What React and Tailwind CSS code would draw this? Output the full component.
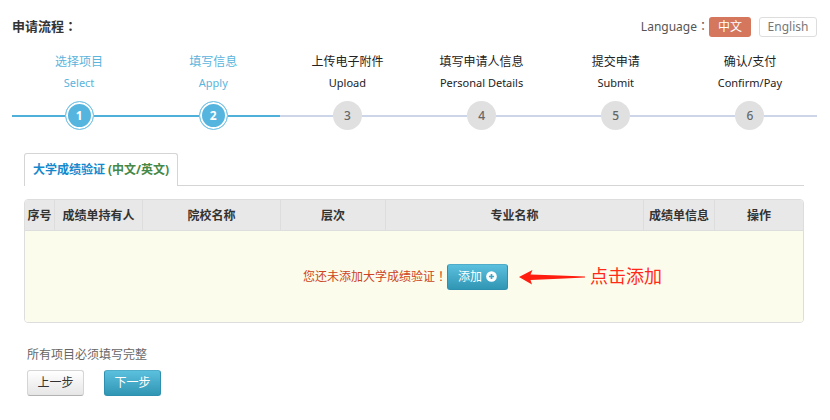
import { clsx } from "clsx";

const steps = [
  { zh: "选择项目", en: "Select" },
  { zh: "填写信息", en: "Apply" },
  { zh: "上传电子附件", en: "Upload" },
  { zh: "填写申请人信息", en: "Personal Details" },
  { zh: "提交申请", en: "Submit" },
  { zh: "确认/支付", en: "Confirm/Pay" },
];

const columns = [
  { label: "序号", width: "w-[29px]" },
  { label: "成绩单持有人", width: "w-[88px]" },
  { label: "院校名称", width: "w-[138px]" },
  { label: "层次", width: "w-[105px]" },
  { label: "专业名称", width: "" },
  { label: "成绩单信息", width: "w-[71px]" },
  { label: "操作", width: "w-[89px]" },
];

const blueButton =
  "rounded-[3px] border border-[#2f8fae] border-t-[#4fadc9] bg-linear-to-b from-[#5bc0de] to-[#2f96b4] text-white";

// Full-width punctuation drawn centred in its em box.
function Mark({ children }) {
  return <span className="font-['Noto_Sans_CJK_TC',sans-serif] leading-none">{children}</span>;
}

function Step({ step, number, done }) {
  const line = clsx("h-[2px] flex-1", done ? "bg-[#4fb0da]" : "bg-[#ccd6e8]");
  return (
    <li className={clsx("flex flex-col items-center", done ? "text-[#5bb4dc]" : "text-[#222]")}>
      <span className="text-[12px] leading-[22px]">{step.zh}</span>
      <span className="text-[11px] leading-[20px]">{step.en}</span>
      <div className="mt-[8px] flex w-full items-center">
        <span className={line} />
        <span
          className={clsx(
            "flex size-[29px] items-center justify-center rounded-full text-[12px]",
            done
              ? "border border-[#7cc5e5] bg-[#56b5df] font-bold text-white inset-ring-2 inset-ring-white"
              : "bg-[#e0e0e0] font-medium text-[#666]"
          )}
        >
          {number}
        </span>
        <span className={line} />
      </div>
    </li>
  );
}

function PlusCircle() {
  return (
    <svg viewBox="0 0 12 12" className="size-[11px]" aria-hidden="true">
      <circle cx="6" cy="6" r="5.8" fill="#fff" />
      <path d="M6 3.2v5.6M3.2 6h5.6" stroke="#3fa5c4" strokeWidth="1.8" />
    </svg>
  );
}

function Arrow() {
  return (
    <svg viewBox="0 0 67 16" className="h-[16px] w-[67px]" aria-hidden="true">
      <path d="M0 8L13.500 1L11.500 5.400L40 6.400L66 7.600V8.400L40 9.800L11.500 11L13 15.500Z" fill="#ff1e10" />
    </svg>
  );
}

export default function App() {
  return (
    <main className="bg-white pt-[16px] pr-[13px] pl-[12px] font-['Noto_Sans','Noto_Sans_CJK_SC',sans-serif] text-[12px] text-[#333]">
      <header className="flex h-[22px] items-center justify-between">
        <h1 className="text-[13px] font-bold">
          申请流程<Mark>：</Mark>
        </h1>
        <div className="flex items-center">
          <span className="text-[#555]">
            Language<Mark>：</Mark>
          </span>
          <button type="button" className="h-[20px] w-[42px] rounded-[3px] bg-[#d4775c] text-white">
            中文
          </button>
          <button
            type="button"
            className="ml-[8px] h-[20px] w-[58px] rounded-[3px] border border-[#ddd] text-[#777]"
          >
            English
          </button>
        </div>
      </header>

      <ol className="mt-[13px] grid grid-cols-6">
        {steps.map((step, i) => (
          <Step key={step.en} step={step} number={i + 1} done={i < 2} />
        ))}
      </ol>

      <section className="mt-[23px] pr-[13px] pl-[12px]">
        <div role="tablist" className="flex">
          <button
            type="button"
            role="tab"
            aria-selected="true"
            className="h-[33px] w-[154px] rounded-t-[3px] border border-b-0 border-[#d5d5d5] font-bold whitespace-nowrap text-[#1588cc]"
          >
            大学成绩验证 <span className="text-[#468847]">(中文/英文)</span>
          </button>
          <div className="flex-1 border-b border-[#d5d5d5]" />
        </div>

        <table className="mt-[13px] w-full table-fixed border-separate border-spacing-0 overflow-hidden rounded-[4px] border border-[#ddd] text-center">
          <thead>
            <tr className="h-[31px] bg-[#e8e8e8]">
              {columns.map((column) => (
                <th
                  key={column.label}
                  className={clsx(
                    "border-b border-l border-[#ddd] pt-[2px] whitespace-nowrap first:border-l-0",
                    column.width
                  )}
                >
                  {column.label}
                </th>
              ))}
            </tr>
          </thead>
          <tbody>
            <tr className="h-[91px] bg-[#fcfcec]">
              <td colSpan={7} className="pr-[17px]">
                <div className="relative inline-flex items-center">
                  <span className="text-[#cc4422]">
                    您还未添加大学成绩验证<Mark>！</Mark>
                  </span>
                  <button
                    type="button"
                    className={clsx(blueButton, "flex h-[26px] w-[61px] items-center justify-center gap-[4px]")}
                  >
                    添加
                    <PlusCircle />
                  </button>
                  <div className="absolute left-full ml-[11px] flex items-center gap-[4px] whitespace-nowrap">
                    <Arrow />
                    <span className="text-[18px] text-[#ff2a1a]">点击添加</span>
                  </div>
                </div>
              </td>
            </tr>
          </tbody>
        </table>
      </section>

      <footer className="mt-[22px] px-[15px]">
        <p className="leading-[20px] text-[#666]">所有项目必须填写完整</p>
        <div className="mt-[5px] flex gap-[20px]">
          <button
            type="button"
            className="h-[26px] w-[57px] rounded-[3px] border border-[#d5d5d5] border-b-[#b3b3b3] bg-linear-to-b from-white to-[#e6e6e6]"
          >
            上一步
          </button>
          <button type="button" className={clsx(blueButton, "h-[26px] w-[57px]")}>
            下一步
          </button>
        </div>
      </footer>
    </main>
  );
}
